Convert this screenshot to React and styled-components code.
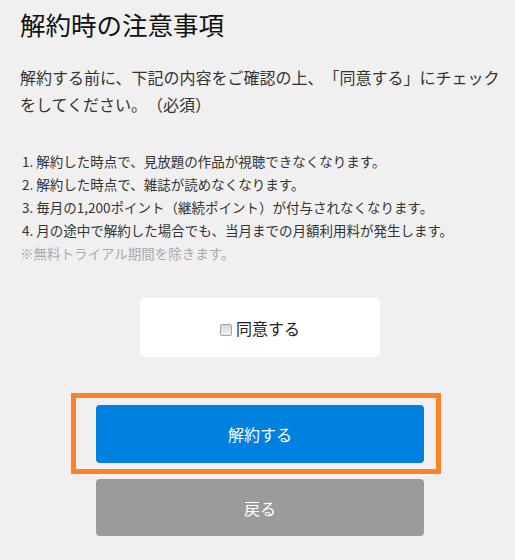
import styled, { createGlobalStyle } from 'styled-components';

const GlobalStyle = createGlobalStyle`
  body {
    margin: 0;
    background-color: #f0f0f0;
    font-family: "Noto Sans CJK JP", "Noto Sans", sans-serif;
    color: #333;
    text-spacing-trim: space-all;
  }
`;

const Page = styled.main`
  padding: 6px 15px 30px 20px;
`;

const Title = styled.h1`
  margin: 0;
  font-size: 25.5px;
  line-height: 35px;
  font-weight: 400;
  color: #111;
`;

const Intro = styled.p`
  margin: 23px 0 0;
  font-size: 16px;
  line-height: 27px;
  color: #333;
`;

const Notes = styled.ol`
  margin: 32px 0 0;
  padding: 0 0 0 2px;
  list-style: decimal inside;
  font-size: 13.5px;
  line-height: 23px;
  color: #333;
`;

const Note = styled.li`
  &::marker {
    content: counter(list-item) ". ";
  }
`;

const Remark = styled.p`
  margin: 0;
  font-size: 13.5px;
  line-height: 23px;
  color: #aaa;
`;

const Actions = styled.div`
  margin-top: 33px;
  display: flex;
  flex-direction: column;
  align-items: center;
`;

const AgreeBox = styled.label`
  width: 240px;
  height: 59px;
  box-sizing: border-box;
  display: flex;
  align-items: center;
  justify-content: center;
  gap: 4px;
  background: #fff;
  border-radius: 5px;
  font-size: 16px;
  color: #222;
  cursor: pointer;
`;

const Check = styled.input`
  appearance: none;
  margin: 4px 0 0;
  width: 12px;
  height: 12px;
  box-sizing: border-box;
  border: 1px solid #a4a4a4;
  border-radius: 2px;
  background: linear-gradient(#d8d8d8, #f2f2f2);
`;

const Highlight = styled.div`
  position: relative;
  margin-top: 48px;
`;

const Frame = styled.span`
  position: absolute;
  top: -12px;
  bottom: -11px;
  left: -25px;
  right: -17px;
  border: 5px solid #ff8226;
  pointer-events: none;
`;

const Button = styled.button`
  display: block;
  width: 328px;
  height: ${(p) => p.$h}px;
  margin-top: ${(p) => p.$top}px;
  border: none;
  border-radius: 4px;
  background: ${(p) => p.$bg};
  color: #fff;
  font-family: inherit;
  font-size: 16px;
  cursor: pointer;
`;

export default function App() {
  return (
    <Page>
      <GlobalStyle />
      <Title>解約時の注意事項</Title>
      <Intro>
        解約する前に、下記の内容をご確認の上、「同意する」にチェックをしてください。（必須）
      </Intro>
      <Notes>
        <Note>解約した時点で、見放題の作品が視聴できなくなります。</Note>
        <Note>解約した時点で、雑誌が読めなくなります。</Note>
        <Note>毎月の1,200ポイント（継続ポイント）が付与されなくなります。</Note>
        <Note>月の途中で解約した場合でも、当月までの月額利用料が発生します。</Note>
      </Notes>
      <Remark>※無料トライアル期間を除きます。</Remark>
      <Actions>
        <AgreeBox>
          <Check type="checkbox" />
          同意する
        </AgreeBox>
        <Highlight>
          <Button $bg="#0080df" $h={58} $top={0}>解約する</Button>
          <Frame />
        </Highlight>
        <Button $bg="#9b9b9b" $h={57} $top={16}>戻る</Button>
      </Actions>
    </Page>
  );
}
